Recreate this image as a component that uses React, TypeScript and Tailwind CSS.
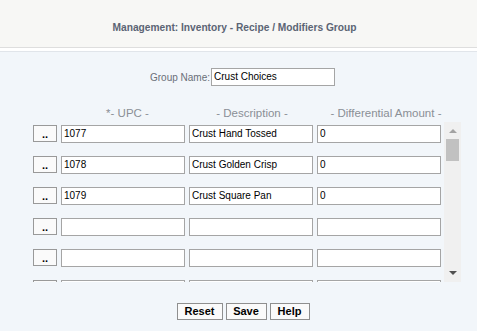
const rows = [
  { upc: "1077", desc: "Crust Hand Tossed", amt: "0" },
  { upc: "1078", desc: "Crust Golden Crisp", amt: "0" },
  { upc: "1079", desc: "Crust Square Pan", amt: "0" },
  { upc: "", desc: "", amt: "" },
  { upc: "", desc: "", amt: "" },
  { upc: "", desc: "", amt: "" },
];

const font = { fontFamily: '"Liberation Sans", Arial, sans-serif' };

function Field({ value }: { value: string }) {
  return (
    <div className="h-[18px] w-[124px] shrink-0 whitespace-nowrap border border-[#a5a5a5] bg-white px-[2px] text-[10px] leading-[16px] text-black">
      {value}
    </div>
  );
}

function Btn({ label, w }: { label: string; w: string }) {
  return (
    <button
      className={`${w} h-[17px] border border-[#8f8f8f] bg-[#fafafa] text-[11px] font-bold leading-[15px] text-black`}
    >
      {label}
    </button>
  );
}

export default function App() {
  return (
    <div className="h-[331px] w-[477px] overflow-hidden bg-[#f2f6fa]" style={font}>
      <div className="h-[48px] border-b border-[#dedede] bg-[#f7f7f5] pr-[8px] pt-[21px] text-center text-[10.2px] font-bold leading-[14px] text-[#5b6474]">
        Management: Inventory - Recipe / Modifiers Group
      </div>
      <div className="h-[4px] border-b border-[#e1e5ea] bg-white" />

      <div className="flex items-center pl-[150px] pt-[16px]">
        <span className="shrink-0 whitespace-nowrap pr-[1px] text-[10px] text-[#6a6f78]">
          Group Name:
        </span>
        <Field value="Crust Choices" />
      </div>

      <div className="mt-[21px] flex whitespace-nowrap pl-[61px] text-[11.5px] leading-[13px] text-[#8a8f96]">
        <span className="w-[133px] text-center">*- UPC -</span>
        <span className="w-[116px] text-center">- Description -</span>
        <span className="w-[152px] text-center">- Differential Amount -</span>
      </div>

      <div className="mt-[2px] flex h-[160px] pl-[33px]">
        <div className="flex w-[408px] flex-col gap-[13px] overflow-hidden pt-[3px]">
          {rows.map((r, i) => (
            <div key={i} className="flex shrink-0 gap-[4px]">
              <button className="h-[17px] w-[24px] shrink-0 border border-[#999] bg-[#fafafa] text-[11px] font-bold leading-[10px] text-black">
                ..
              </button>
              <Field value={r.upc} />
              <Field value={r.desc} />
              <Field value={r.amt} />
            </div>
          ))}
        </div>
        <div className="ml-[3px] flex w-[17px] flex-col items-center bg-[#f0f0f0]">
          <div className="flex h-[17px] w-full items-center justify-center">
            <svg width="8" height="5" viewBox="0 0 8 5">
              <path d="M0 5 L4 1 L8 5 Z" fill="#a3a3a3" />
            </svg>
          </div>
          <div className="h-[22px] w-[13px] bg-[#c1c1c1]" />
          <div className="flex-1" />
          <div className="flex h-[17px] w-full items-center justify-center">
            <svg width="8" height="5" viewBox="0 0 8 5">
              <path d="M0 0 L8 0 L4 4 Z" fill="#505050" />
            </svg>
          </div>
        </div>
      </div>

      <div className="mt-[21px] flex justify-center gap-[3px] pl-[9px]">
        <Btn label="Reset" w="w-[46px]" />
        <Btn label="Save" w="w-[41px]" />
        <Btn label="Help" w="w-[40px]" />
      </div>
    </div>
  );
}
